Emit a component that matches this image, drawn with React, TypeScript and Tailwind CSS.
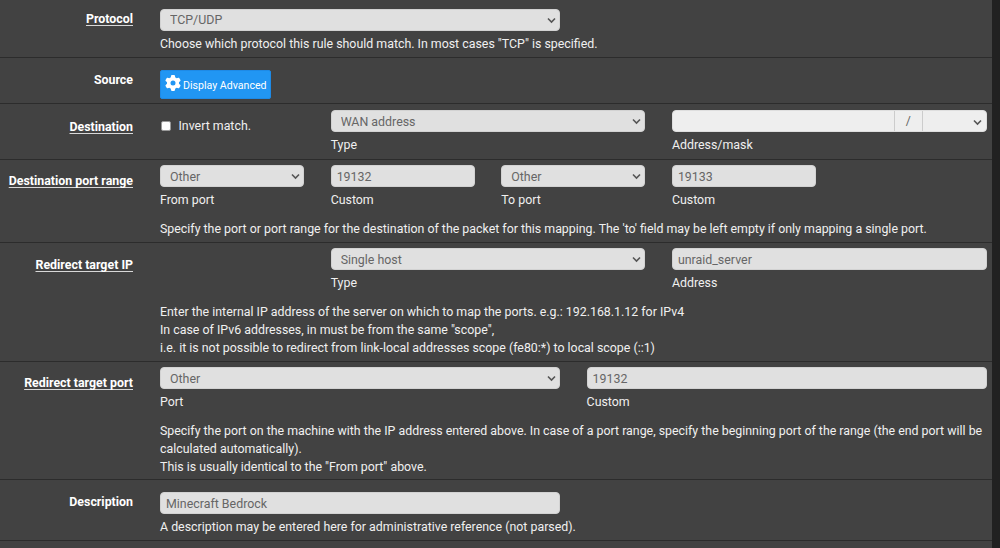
import type { ReactNode } from "react";
import clsx from "clsx";
import { FaGear } from "react-icons/fa6";

const controlClass =
  "block h-[22px] w-full appearance-none rounded-[4px] border border-[#d2d2d2] bg-[#e0e0e0] text-[12.4px] leading-[19px] text-[#666] outline-none";

function Chevron() {
  return (
    <svg
      className="pointer-events-none absolute top-[8px] right-[4px] h-[7px] w-[9px]"
      viewBox="0 0 9 7"
      fill="none"
      stroke="#555"
      strokeWidth="1.6"
    >
      <path d="M1 1.5 L4.5 5 L8 1.5" />
    </svg>
  );
}

function Select({ value, className }: { value: string; className?: string }) {
  return (
    <div className="relative">
      <select
        className={clsx(controlClass, "pr-5 pl-[9px]", className)}
        defaultValue={value}
      >
        <option>{value}</option>
      </select>
      <Chevron />
    </div>
  );
}

function Input({ value }: { value: string }) {
  return (
    <input
      type="text"
      className={clsx(controlClass, "px-[5px]")}
      defaultValue={value}
    />
  );
}

function Field({
  className,
  caption,
  children,
}: {
  className: string;
  caption: string;
  children: ReactNode;
}) {
  return (
    <div className={className}>
      {children}
      <span className="mt-[5.3px] block">{caption}</span>
    </div>
  );
}

interface RowProps {
  label: string;
  required?: boolean;
  className: string;
  labelClassName: string;
  children: ReactNode;
}

function Row({
  label,
  required,
  className,
  labelClassName,
  children,
}: RowProps) {
  return (
    <div className={clsx("flex border-b border-[#2c2c2c]", className)}>
      <div
        className={clsx(
          "w-[133px] shrink-0 text-right leading-[18px] font-bold text-white",
          required &&
            "underline decoration-[#d8d8d8] decoration-1 underline-offset-2 [text-decoration-skip-ink:none]",
          labelClassName
        )}
      >
        {label}
      </div>
      <div className="ml-[27px] w-[826.6px] shrink-0">{children}</div>
    </div>
  );
}

export default function App() {
  return (
    <div className="flex h-[548px] w-[1000px] overflow-hidden bg-[#212121] font-['Roboto',sans-serif] text-[12.38px] leading-[17.7px] text-[#f0f0f0]">
      <form className="w-[992px] shrink-0 bg-[#424242]">
        <Row
          label="Protocol"
          required
          className="h-[58px] pt-[9px]"
          labelClassName="pt-px"
        >
          <div className="w-[400px]">
            <Select value="TCP/UDP" className="pb-px" />
          </div>
          <p className="mt-[5.3px]">
            Choose which protocol this rule should match. In most cases "TCP" is
            specified.
          </p>
        </Row>

        <Row label="Source" className="h-[46px] pt-3" labelClassName="pt-px">
          <button
            type="button"
            className="flex h-[29px] w-[111px] items-center rounded-[2px] border border-[#1e8ae6] bg-[#2196f3] pl-1 text-[10.6px] whitespace-nowrap text-white"
          >
            <FaGear className="mr-[2px] mb-[3px] size-4 shrink-0" />
            <span className="pt-[2px]">Display Advanced</span>
          </button>
        </Row>

        <Row
          label="Destination"
          required
          className="h-[56px] pt-[6px]"
          labelClassName="pt-2"
        >
          <div className="grid grid-cols-10 gap-x-[26.6px]">
            <label className="col-span-2 flex items-center gap-[7.5px] self-start pt-[8px] pl-px">
              <input
                type="checkbox"
                className="mb-[2px] size-[10px] appearance-none rounded-[2px] border border-[#999] bg-white"
              />
              Invert match.
            </label>
            <Field className="col-span-4" caption="Type">
              <Select value="WAN address" />
            </Field>
            <Field className="col-span-4" caption="Address/mask">
              <div className="flex h-[22px] overflow-hidden rounded-[4px] border border-[#dedede] bg-[#eee]">
                <input
                  type="text"
                  className="w-[221px] px-[5px] text-[#666] outline-none"
                />
                <span className="w-[29px] border-x border-[#ccc] text-center leading-[21px] text-[#666]">
                  /
                </span>
                <div className="relative flex-1">
                  <select className="h-full w-full appearance-none outline-none" />
                  <Chevron />
                </div>
              </div>
            </Field>
          </div>
        </Row>

        <Row
          label="Destination port range"
          required
          className="h-[83px] pt-[5px]"
          labelClassName="pt-[7px]"
        >
          <div className="grid grid-cols-10 gap-x-[26.6px]">
            <Field className="col-span-2" caption="From port">
              <Select value="Other" />
            </Field>
            <Field className="col-span-2" caption="Custom">
              <Input value="19132" />
            </Field>
            <Field className="col-span-2" caption="To port">
              <Select value="Other" />
            </Field>
            <Field className="col-span-2" caption="Custom">
              <Input value="19133" />
            </Field>
          </div>
          <p className="mt-[11.2px]">
            Specify the port or port range for the destination of the packet for
            this mapping. The 'to' field may be left empty if only mapping a
            single port.
          </p>
        </Row>

        <Row
          label="Redirect target IP"
          required
          className="h-[119px] pt-[5px]"
          labelClassName="pt-2"
        >
          <div className="grid grid-cols-10 gap-x-[26.6px]">
            <Field className="col-span-4 col-start-3" caption="Type">
              <Select value="Single host" />
            </Field>
            <Field className="col-span-4" caption="Address">
              <Input value="unraid_server" />
            </Field>
          </div>
          <p className="mt-[11.2px]">
            Enter the internal IP address of the server on which to map the
            ports. e.g.: 192.168.1.12 for IPv4
            <br />
            In case of IPv6 addresses, in must be from the same "scope",
            <br />
            i.e. it is not possible to redirect from link-local addresses scope
            (fe80:*) to local scope (::1)
          </p>
        </Row>

        <Row
          label="Redirect target port"
          required
          className="h-[118px] pt-[5px]"
          labelClassName="pt-[7px]"
        >
          <div className="grid grid-cols-10 gap-x-[26.6px]">
            <Field className="col-span-5" caption="Port">
              <Select value="Other" />
            </Field>
            <Field className="col-span-5" caption="Custom">
              <Input value="19132" />
            </Field>
          </div>
          <p className="mt-[11.2px]">
            Specify the port on the machine with the IP address entered above. In
            case of a port range, specify the beginning port of the range (the
            end port will be
            <br />
            calculated automatically).
            <br />
            This is usually identical to the "From port" above.
          </p>
        </Row>

        <Row
          label="Description"
          className="h-[61px] pt-3"
          labelClassName="pt-px"
        >
          <div className="w-[400px]">
            <Input value="Minecraft Bedrock" />
          </div>
          <p className="mt-[5.3px]">
            A description may be entered here for administrative reference (not
            parsed).
          </p>
        </Row>
      </form>
    </div>
  );
}
